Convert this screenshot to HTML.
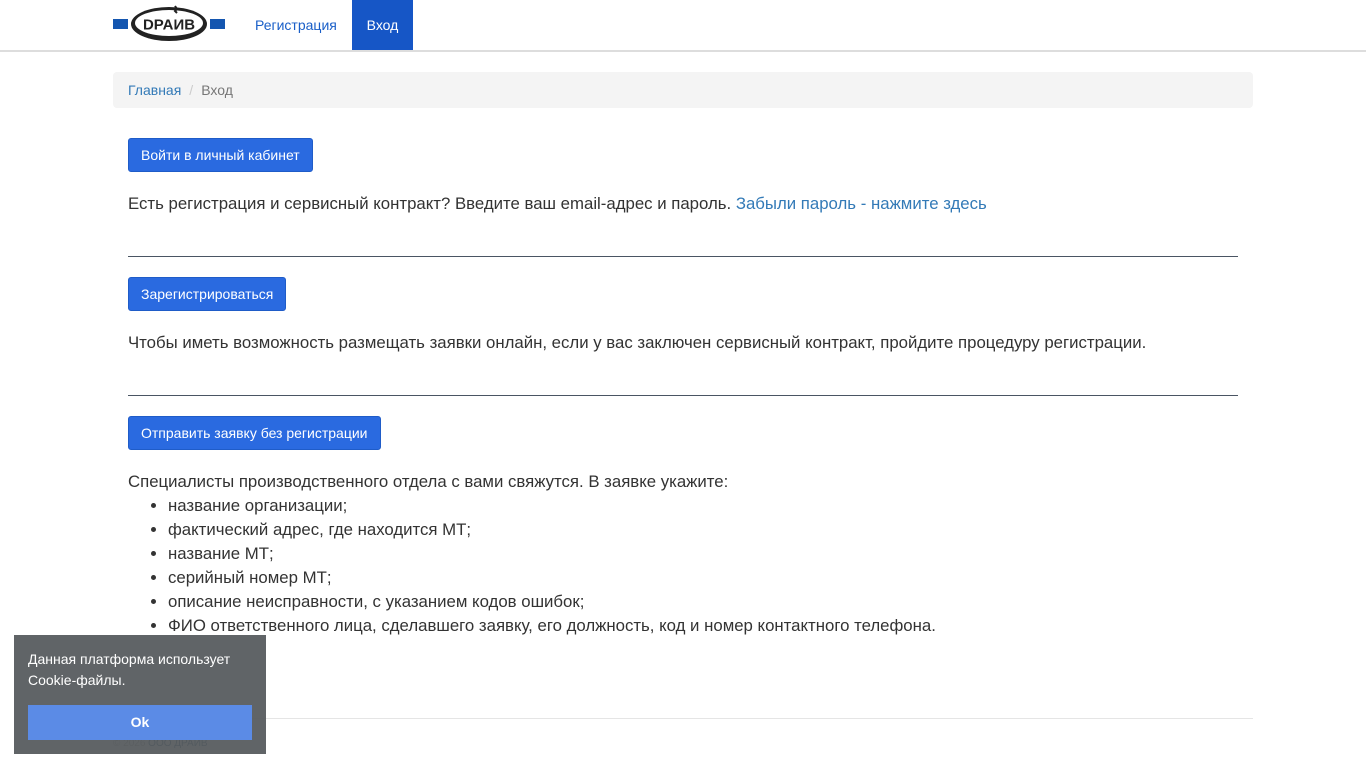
<!DOCTYPE html>
<html><head><meta charset="utf-8">
<style>
body{margin:0;font-family:"Liberation Sans",sans-serif;color:#333;background:#fff;font-size:14px}
.nav{height:50px;border-bottom:2px solid #ddd;position:relative}
.logo{position:absolute;left:113px;top:5px}
.nav a{position:absolute;top:0;height:50px;line-height:50px;font-size:14px;text-decoration:none}
.reg{left:255px;color:#1a5fc8}
.vh{left:352px;width:61px;background:#1656c6;color:#fff;text-align:center}
.bc{position:absolute;left:113px;top:72px;width:1140px;height:36px;background:#f4f4f4;border-radius:4px;line-height:36px;font-size:14px}
.bc span{color:#777}
.btn{position:absolute;left:128px;height:34px;line-height:33px;padding:0 12px;box-sizing:border-box;background:#2a6ae0;border:1px solid #1f5cc8;border-radius:3px;color:#fff;font-size:14px}
.t{position:absolute;left:128px;font-size:16.8px;color:#333}
.hr{position:absolute;left:128px;width:1110px;height:1px;background:#4a5563}
ul{position:absolute;left:128px;top:494px;margin:0;padding-left:40px;font-size:16.8px;line-height:24px}
.foot{position:absolute;left:113px;top:718px;width:1140px;border-top:1px solid #e5e5e5}
.fc{position:absolute;left:113px;top:738px;font-size:10px;color:#999}
.ck{position:absolute;left:14px;top:635px;width:252px;height:119px;background:rgba(86,90,94,0.94);color:#fff;font-size:14px}
.ck p{margin:14px 14px 0;line-height:21px}
.ok{position:absolute;left:14px;top:70px;width:224px;height:35px;line-height:35px;background:#5b8be6;text-align:center;font-weight:bold;font-size:14px}
</style></head><body>
<div class="nav">
<svg class="logo" width="112" height="38" viewBox="0 0 112 38">
<rect x="0" y="14" width="15" height="10" fill="#1456b0"/><rect x="97" y="14" width="15" height="10" fill="#1456b0"/>
<ellipse cx="56" cy="19" rx="38" ry="17" fill="#222"/>
<ellipse cx="56" cy="18" rx="34" ry="13" fill="#fff"/>
<path d="M62 1 l2 3 -2 2 2 2" stroke="#222" stroke-width="2" fill="none"/>
<text x="56" y="24.5" text-anchor="middle" font-family="Liberation Sans" font-weight="bold" font-size="15" textLength="52" lengthAdjust="spacingAndGlyphs" fill="#222">DPAИB</text>
</svg>
<a class="reg">Регистрация</a><a class="vh">Вход</a>
</div>
<div class="bc"><a style="position:static;color:#337ab7;margin-left:15px;height:auto;line-height:36px">Главная</a><span style="color:#ccc;margin:0 8px">/</span><span>Вход</span></div>
<div class="btn" style="top:138px">Войти в личный кабинет</div>
<div class="t" style="top:194px">Есть регистрация и сервисный контракт? Введите ваш email-адрес и пароль. <span style="color:#337ab7">Забыли пароль - нажмите здесь</span></div>
<div class="hr" style="top:256px"></div>
<div class="btn" style="top:277px">Зарегистрироваться</div>
<div class="t" style="top:333px">Чтобы иметь возможность размещать заявки онлайн, если у вас заключен сервисный контракт, пройдите процедуру регистрации.</div>
<div class="hr" style="top:395px"></div>
<div class="btn" style="top:416px">Отправить заявку без регистрации</div>
<div class="t" style="top:472px">Специалисты производственного отдела с вами свяжутся. В заявке укажите:</div>
<ul><li>название организации;</li><li>фактический адрес, где находится МТ;</li><li>название МТ;</li><li>серийный номер МТ;</li><li>описание неисправности, с указанием кодов ошибок;</li><li>ФИО ответственного лица, сделавшего заявку, его должность, код и номер контактного телефона.</li></ul>
<div class="foot"></div>
<div class="fc">© 2026 <span style="color:#23527c">ООО ДРАЙВ</span></div>
<div class="ck"><p>Данная платформа использует Cookie-файлы.</p><div class="ok">Ok</div></div>
</body></html>
